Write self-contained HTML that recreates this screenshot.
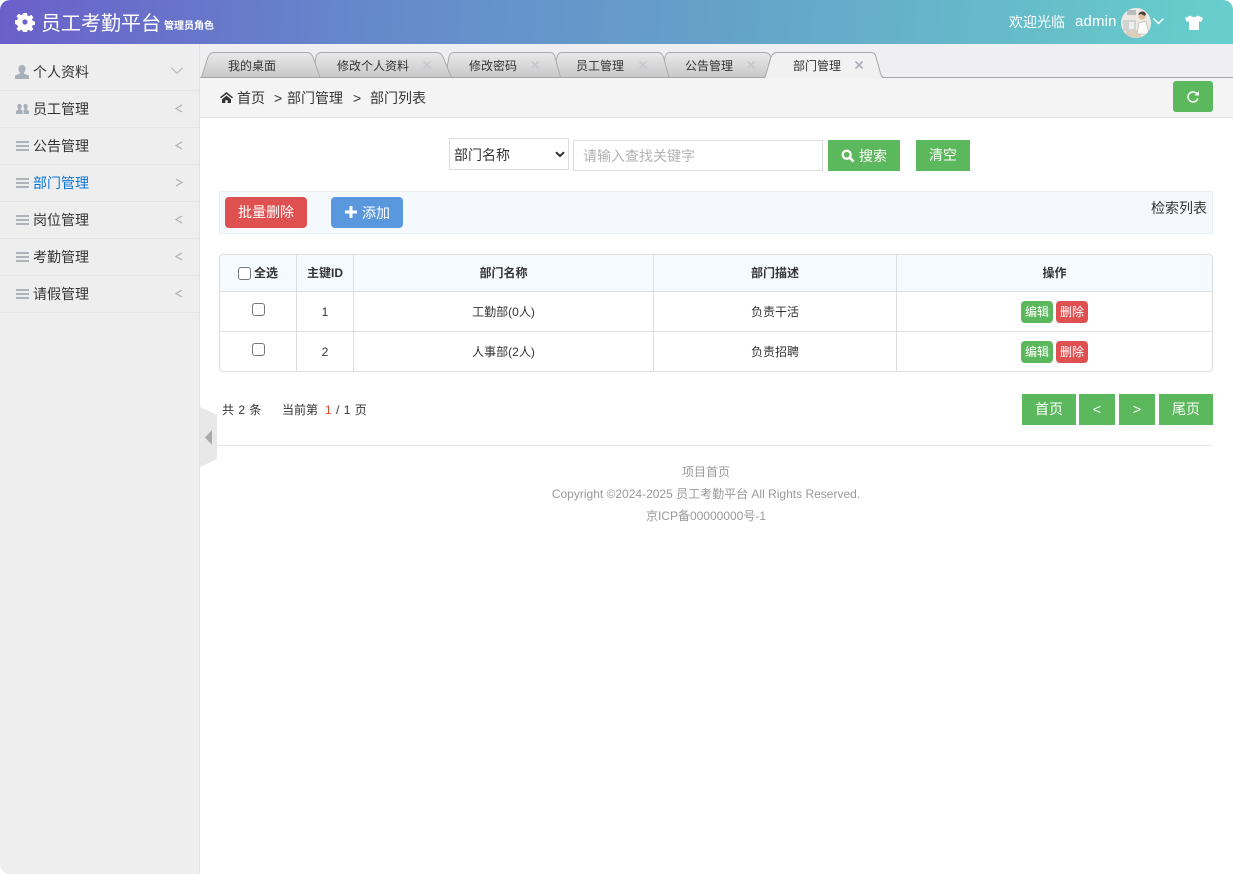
<!DOCTYPE html>
<html lang="zh"><head><meta charset="utf-8"><title>员工考勤平台</title>
<style>
*{box-sizing:border-box}
html,body{margin:0;padding:0;width:1233px;height:874px;overflow:hidden;background:#fff}
body{font-family:"Liberation Sans","Noto Sans CJK SC",sans-serif;color:#333;font-size:14px}
#root{position:relative;width:1233px;height:874px;overflow:hidden;border-radius:10px;background:#fff}
.a{position:absolute;white-space:nowrap}
.t{position:absolute;white-space:nowrap;line-height:20px}
.header{left:0;top:0;width:1233px;height:44px;background:linear-gradient(95deg,#6a60ca 0%,#6589cb 30%,#65a3c9 60%,#67cfcb 100%)}
.side{left:0;top:44px;width:200px;height:830px;background:#eee;border-right:1px solid #e2e2e2}
.row{position:absolute;left:0;width:199px;height:37px;border-bottom:1px solid #e4e4e4}
.tabbar{left:200px;top:44px;width:1033px;height:34px;background:#efeff1}
.crumb{left:200px;top:78px;width:1033px;height:40px;background:#f4f4f4;border-bottom:1px solid #e6e6e6}
.btn{position:absolute;color:#fff;text-align:center;white-space:nowrap}
.g{background:#5cb85c}
.r{background:#df5151}
.cb{position:absolute;width:13px;height:13px;border:1px solid #767676;border-radius:3px;background:#fff}
.vl{position:absolute;top:255px;width:1px;height:116px;background:#ddd}
.hl{position:absolute;left:220px;width:992px;height:1px;background:#ddd}
.c12{font-size:12px;text-align:center}
</style></head><body><div id="root">

<div class="a header"></div>
<svg class="a" style="left:15px;top:12px" width="20" height="20" viewBox="0 0 20 20"><path fill="#fff" fill-rule="evenodd" d="M8 1h4l.5 2.600 1.500.7 2.200-1.500 2.300 2.400-1.500 2.200.6 1.500 2.400.6v3.400l-2.500.5-.6 1.500 1.500 2.100-2.400 2.400-2.200-1.500-1.500.6-.4 2.400H8l-.5-2.500-1.500-.6-2.100 1.500-2.400-2.400 1.500-2.100-.6-1.500L0 11.700V8.300l2.400-.5.6-1.500-1.500-2.200 2.400-2.400L6 3.200l1.500-.6zM10 7.400a2.600 2.600 0 1 0 0 5.200 2.600 2.600 0 0 0 0-5.200z"/></svg>
<div class="t" style="left:41px;top:13px;font-size:20px;line-height:22px;color:#fff">员工考勤平台</div>
<div class="t" style="left:164px;top:17px;font-size:10px;font-weight:bold;color:#fff">管理员角色</div>
<div class="t" style="left:1009px;top:12px;color:#fff">欢迎光临</div>
<div class="t" style="left:1075px;top:12px;color:#fff;font-size:15px;letter-spacing:.15px">admin</div>
<svg class="a" style="left:1121px;top:8px" width="30" height="30" viewBox="0 0 30 30"><defs><clipPath id="cp"><circle cx="15" cy="15" r="15"/></clipPath></defs><g clip-path="url(#cp)"><rect width="30" height="30" fill="#ece9e2"/><rect x="2" y="12" width="13" height="11" fill="#cfd3d2"/><rect x="6" y="2" width="9" height="5" fill="#b9bfc0"/><rect x="5" y="23" width="15" height="7" fill="#dccfb9"/><path d="M18 15l7-2 3 13h-12z" fill="#fbfbf8" stroke="#a9aeb0" stroke-width=".6"/><circle cx="21" cy="8" r="3.600" fill="#e3bc9c"/><path d="M17.500 7c0-4 6-5 7.500-1l-1 2-4-2z" fill="#4c4337"/><rect x="8" y="14" width="5" height="7" fill="#eef0ef"/></g></svg>
<svg class="a" style="left:1152px;top:17px" width="13" height="9" viewBox="0 0 13 9"><path d="M1.500 1.500L6.500 6.500L11.500 1.500" fill="none" stroke="#fff" stroke-width="1.400"/></svg>
<svg class="a" style="left:1185px;top:15px" width="18" height="15" viewBox="0 0 18 15"><path fill="#fff" d="M5.500.5L0 3l1.800 4L4 6.300V15h10V6.300l2.200.7L18 3 12.500.5C11.500 2.500 6.500 2.500 5.500.5z"/></svg>

<div class="a side"></div>
<div class="row" style="top:54px"></div><div class="row" style="top:91px"></div><div class="row" style="top:128px"></div><div class="row" style="top:165px"></div><div class="row" style="top:202px"></div><div class="row" style="top:239px"></div><div class="row" style="top:276px"></div>
<svg class="a" style="left:15px;top:65px" width="14" height="14" viewBox="0 0 14 14"><path fill="#a8afb8" d="M7 0c2.200 0 3.500 1.400 3.500 3.800 0 1.600-.7 3-1.500 3.800v1L14 10.500V14H0v-3.500l5-1.900v-1C4.200 6.800 3.500 5.400 3.500 3.800 3.500 1.400 4.800 0 7 0z"/></svg>
<svg class="a" style="left:16px;top:104px" width="13" height="10" viewBox="0 0 13 10"><path fill="#a8afb8" d="M3.500 0C5 0 5.700 1 5.700 2.400c0 1-.4 1.800-.9 2.400v.8L6.500 6.500V10H0V7l2.200-1.400v-.8C1.700 4.200 1.300 3.400 1.300 2.400 1.300 1 2 0 3.500 0zM9.500 0c1.500 0 2.200 1 2.200 2.400 0 1-.4 1.800-.9 2.400v.8L13 7v3H7.500V6.400l1-.8v-.8c-.5-.6-.9-1.400-.9-2.400C7.600 1 8 0 9.500 0z"/></svg>
<svg class="a" style="left:16px;top:141px" width="13" height="10"><path fill="#aeb3ba" d="M0 0h13v2H0zM0 4h13v2H0zM0 8h13v2H0z"/></svg>
<svg class="a" style="left:16px;top:178px" width="13" height="10"><path fill="#aeb3ba" d="M0 0h13v2H0zM0 4h13v2H0zM0 8h13v2H0z"/></svg>
<svg class="a" style="left:16px;top:215px" width="13" height="10"><path fill="#aeb3ba" d="M0 0h13v2H0zM0 4h13v2H0zM0 8h13v2H0z"/></svg>
<svg class="a" style="left:16px;top:252px" width="13" height="10"><path fill="#aeb3ba" d="M0 0h13v2H0zM0 4h13v2H0zM0 8h13v2H0z"/></svg>
<svg class="a" style="left:16px;top:289px" width="13" height="10"><path fill="#aeb3ba" d="M0 0h13v2H0zM0 4h13v2H0zM0 8h13v2H0z"/></svg>
<div class="t" style="left:33px;top:62px">个人资料</div>
<div class="t" style="left:33px;top:99px">员工管理</div>
<div class="t" style="left:33px;top:136px">公告管理</div>
<div class="t" style="left:33px;top:173px;color:#0b74d9">部门管理</div>
<div class="t" style="left:33px;top:210px">岗位管理</div>
<div class="t" style="left:33px;top:247px">考勤管理</div>
<div class="t" style="left:33px;top:284px">请假管理</div>
<svg class="a" style="left:171px;top:67px" width="12" height="8"><path d="M.5.8L6 6.300L11.500.8" fill="none" stroke="#b8bcc2" stroke-width="1.200"/></svg>
<svg class="a" style="left:175px;top:104px" width="8" height="9"><path d="M7 1L1 4.500L7 8" fill="none" stroke="#adb1b6" stroke-width="1.200"/></svg>
<svg class="a" style="left:175px;top:141px" width="8" height="9"><path d="M7 1L1 4.500L7 8" fill="none" stroke="#adb1b6" stroke-width="1.200"/></svg>
<svg class="a" style="left:175px;top:178px" width="8" height="9"><path d="M1 1L7 4.500L1 8" fill="none" stroke="#adb1b6" stroke-width="1.200"/></svg>
<svg class="a" style="left:175px;top:215px" width="8" height="9"><path d="M7 1L1 4.500L7 8" fill="none" stroke="#adb1b6" stroke-width="1.200"/></svg>
<svg class="a" style="left:175px;top:252px" width="8" height="9"><path d="M7 1L1 4.500L7 8" fill="none" stroke="#adb1b6" stroke-width="1.200"/></svg>
<svg class="a" style="left:175px;top:289px" width="8" height="9"><path d="M7 1L1 4.500L7 8" fill="none" stroke="#adb1b6" stroke-width="1.200"/></svg>

<div class="a tabbar"></div>
<svg class="a" style="left:200px;top:44px" width="1033" height="35" viewBox="200 44 1033 35">
<defs><linearGradient id="tg" x1="0" y1="0" x2="0" y2="1"><stop offset="0" stop-color="#e9e9e9"/><stop offset="1" stop-color="#c8c8c8"/></linearGradient></defs>
<path d="M660 77.500L665 57Q666 52.500 670 52.500H765Q769 52.500 771 57L778 77.500Z" fill="url(#tg)" stroke="#aaa"/>
<path d="M552 77.500L557 57Q558 52.500 562 52.500H658Q662 52.500 663.500 57L669 77.500Z" fill="url(#tg)" stroke="#aaa"/>
<path d="M445 77.500L449 57Q450 52.500 454 52.500H550Q554 52.500 555 57L560.500 77.500Z" fill="url(#tg)" stroke="#aaa"/>
<path d="M312 77.500L316 57Q317 52.500 322 52.500H437Q441 52.500 443 57L451.500 77.500Z" fill="url(#tg)" stroke="#aaa"/>
<path d="M201.500 77.500L208 57Q210 52.500 214 52.500H307Q311 52.500 313 57L320 77.500Z" fill="url(#tg)" stroke="#aaa"/>
<path d="M200 77.500H1233" stroke="#a8a8a8" fill="none"/>
<path d="M765 78L771 57Q773 52.500 777 52.500H871Q875 52.500 876 57L882 78Z" fill="#f1f1f2"/>
<path d="M765 77.500L771 57Q773 52.500 777 52.500H871Q875 52.500 876 57L881 75Q882 77.500 885 77.500" fill="none" stroke="#a6a6a6"/>
</svg>
<div class="t" style="left:228px;top:56px;font-size:12px">我的桌面</div>
<div class="t" style="left:337px;top:56px;font-size:12px">修改个人资料</div>
<div class="t" style="left:469px;top:56px;font-size:12px">修改密码</div>
<div class="t" style="left:576px;top:56px;font-size:12px">员工管理</div>
<div class="t" style="left:685px;top:56px;font-size:12px">公告管理</div>
<div class="t" style="left:793px;top:56px;font-size:12px">部门管理</div>
<svg class="a" style="left:423px;top:61px" width="8" height="8"><path d="M.5.500L7.500 7.500M7.500.5L.5 7.500" stroke="#c2c7ce" stroke-width="1.500"/></svg>
<svg class="a" style="left:531px;top:61px" width="8" height="8"><path d="M.5.500L7.500 7.500M7.500.5L.5 7.500" stroke="#c2c7ce" stroke-width="1.500"/></svg>
<svg class="a" style="left:639px;top:61px" width="8" height="8"><path d="M.5.500L7.500 7.500M7.500.5L.5 7.500" stroke="#c2c7ce" stroke-width="1.500"/></svg>
<svg class="a" style="left:747px;top:61px" width="8" height="8"><path d="M.5.500L7.500 7.500M7.500.5L.5 7.500" stroke="#c2c7ce" stroke-width="1.500"/></svg>
<svg class="a" style="left:855px;top:61px" width="8" height="8"><path d="M.5.500L7.500 7.500M7.500.5L.5 7.500" stroke="#a8adb5" stroke-width="1.600"/></svg>

<div class="a crumb"></div>
<svg class="a" style="left:220px;top:92px" width="13" height="11" viewBox="0 0 13 11"><path fill="#333" d="M6.500 0L13 5.300l-.9 1.100L6.500 2 .9 6.400 0 5.300zM2 7.200l4.500-3.600L11 7.200V11H7.700V8.200H5.300V11H2z"/></svg>
<div class="t" style="left:237px;top:88px">首页</div>
<div class="t" style="left:274px;top:88px">&gt;</div>
<div class="t" style="left:287px;top:88px">部门管理</div>
<div class="t" style="left:353px;top:88px">&gt;</div>
<div class="t" style="left:370px;top:88px">部门列表</div>
<div class="btn g" style="left:1173px;top:81px;width:40px;height:31px;border-radius:3px"></div>
<svg class="a" style="left:1186px;top:90px" width="14" height="14" viewBox="0 0 14 14"><path d="M11.300 4.300A5 5 0 1 0 11.800 8.500" fill="none" stroke="#fff" stroke-width="1.500"/><path fill="#fff" d="M8.500 5.500h4.500V1z"/></svg>

<div class="a" style="left:449px;top:138px;width:120px;height:32px;border:1px solid #ddd;background:#fff"></div>
<div class="t" style="left:454px;top:145px">部门名称</div>
<svg class="a" style="left:555px;top:151px" width="10" height="7"><path d="M1 1.200L5 5L9 1.200" fill="none" stroke="#333" stroke-width="2"/></svg>
<div class="a" style="left:573px;top:140px;width:250px;height:31px;border:1px solid #ddd;background:#fff"></div>
<div class="t" style="left:583px;top:146px;color:#b3b3b3">请输入查找关键字</div>
<div class="btn g" style="left:828px;top:140px;width:72px;height:31px"></div>
<svg class="a" style="left:841px;top:149px" width="14" height="14" viewBox="0 0 14 14"><circle cx="5.700" cy="5.700" r="4" fill="none" stroke="#fff" stroke-width="2.300"/><path d="M8.800 8.800L12.600 12.600" stroke="#fff" stroke-width="2.600"/></svg>
<div class="t" style="left:859px;top:146px;color:#fff">搜索</div>
<div class="btn g" style="left:916px;top:140px;width:54px;height:31px;line-height:31px">清空</div>

<div class="a" style="left:219px;top:191px;width:994px;height:43px;background:#f5f9fe;border:1px solid #e9eef2"></div>
<div class="btn r" style="left:225px;top:197px;width:82px;height:31px;line-height:31px;border-radius:4px">批量删除</div>
<div class="btn" style="left:331px;top:197px;width:72px;height:31px;border-radius:4px;background:#5a98de"></div>
<svg class="a" style="left:345px;top:206px" width="12" height="12"><path fill="#fff" d="M4.500 0h3v4.500H12v3H7.500V12h-3V7.500H0v-3h4.500z"/></svg>
<div class="t" style="left:362px;top:203px;color:#fff">添加</div>
<div class="t" style="left:1151px;top:198px">检索列表</div>

<div class="a" style="left:219px;top:254px;width:994px;height:118px;border:1px solid #ddd;border-radius:4px;background:#fff"></div>
<div class="a" style="left:220px;top:255px;width:992px;height:36px;background:#f5faff;border-radius:3px 3px 0 0"></div>
<div class="hl" style="top:291px"></div><div class="hl" style="top:331px"></div>
<div class="vl" style="left:296px"></div><div class="vl" style="left:353px"></div><div class="vl" style="left:653px"></div><div class="vl" style="left:896px"></div>
<div class="cb" style="left:238px;top:267px"></div>
<div class="t" style="left:254px;top:263px;font-size:12px;font-weight:bold">全选</div>
<div class="t c12" style="left:297px;width:56px;top:263px;font-weight:bold">主键ID</div>
<div class="t c12" style="left:354px;width:299px;top:263px;font-weight:bold">部门名称</div>
<div class="t c12" style="left:654px;width:242px;top:263px;font-weight:bold">部门描述</div>
<div class="t c12" style="left:897px;width:315px;top:263px;font-weight:bold">操作</div>
<div class="cb" style="left:252px;top:303px"></div>
<div class="cb" style="left:252px;top:343px"></div>
<div class="t c12" style="left:297px;width:56px;top:302px">1</div>
<div class="t c12" style="left:297px;width:56px;top:342px">2</div>
<div class="t c12" style="left:354px;width:299px;top:302px">工勤部(0人)</div>
<div class="t c12" style="left:354px;width:299px;top:342px">人事部(2人)</div>
<div class="t c12" style="left:654px;width:242px;top:302px">负责干活</div>
<div class="t c12" style="left:654px;width:242px;top:342px">负责招聘</div>
<div class="btn g" style="left:1021px;top:301px;width:32px;height:22px;line-height:22px;border-radius:4px;font-size:12px">编辑</div>
<div class="btn r" style="left:1056px;top:301px;width:32px;height:22px;line-height:22px;border-radius:4px;font-size:12px">删除</div>
<div class="btn g" style="left:1021px;top:341px;width:32px;height:22px;line-height:22px;border-radius:4px;font-size:12px">编辑</div>
<div class="btn r" style="left:1056px;top:341px;width:32px;height:22px;line-height:22px;border-radius:4px;font-size:12px">删除</div>

<div class="t" style="left:222px;top:400px;font-size:12px;word-spacing:1px">共 2 条</div>
<div class="t" style="left:282px;top:400px;font-size:12px">当前第</div>
<div class="t" style="left:325px;top:400px;font-size:12px;word-spacing:1px"><span style="color:#d9482b">1</span> / 1 页</div>
<div class="btn g" style="left:1022px;top:394px;width:54px;height:31px;line-height:31px">首页</div>
<div class="btn g" style="left:1079px;top:394px;width:36px;height:31px;line-height:31px">&lt;</div>
<div class="btn g" style="left:1119px;top:394px;width:36px;height:31px;line-height:31px">&gt;</div>
<div class="btn g" style="left:1159px;top:394px;width:54px;height:31px;line-height:31px">尾页</div>

<svg class="a" style="left:200px;top:407px" width="18" height="61"><path d="M0 0L17 8V52L0 60Z" fill="#e8e8e8"/><path d="M12 23V38L5 30.500Z" fill="#aaa"/></svg>
<div class="a" style="left:217px;top:445px;width:995px;height:1px;background:#e6e6e6"></div>
<div class="t c12" style="left:200px;width:1012px;top:462px;color:#999">项目首页</div>
<div class="t c12" style="left:200px;width:1012px;top:484px;color:#999">Copyright ©2024-2025 员工考勤平台 All Rights Reserved.</div>
<div class="t c12" style="left:200px;width:1012px;top:506px;color:#999">京ICP备00000000号-1</div>
</div></body></html>
